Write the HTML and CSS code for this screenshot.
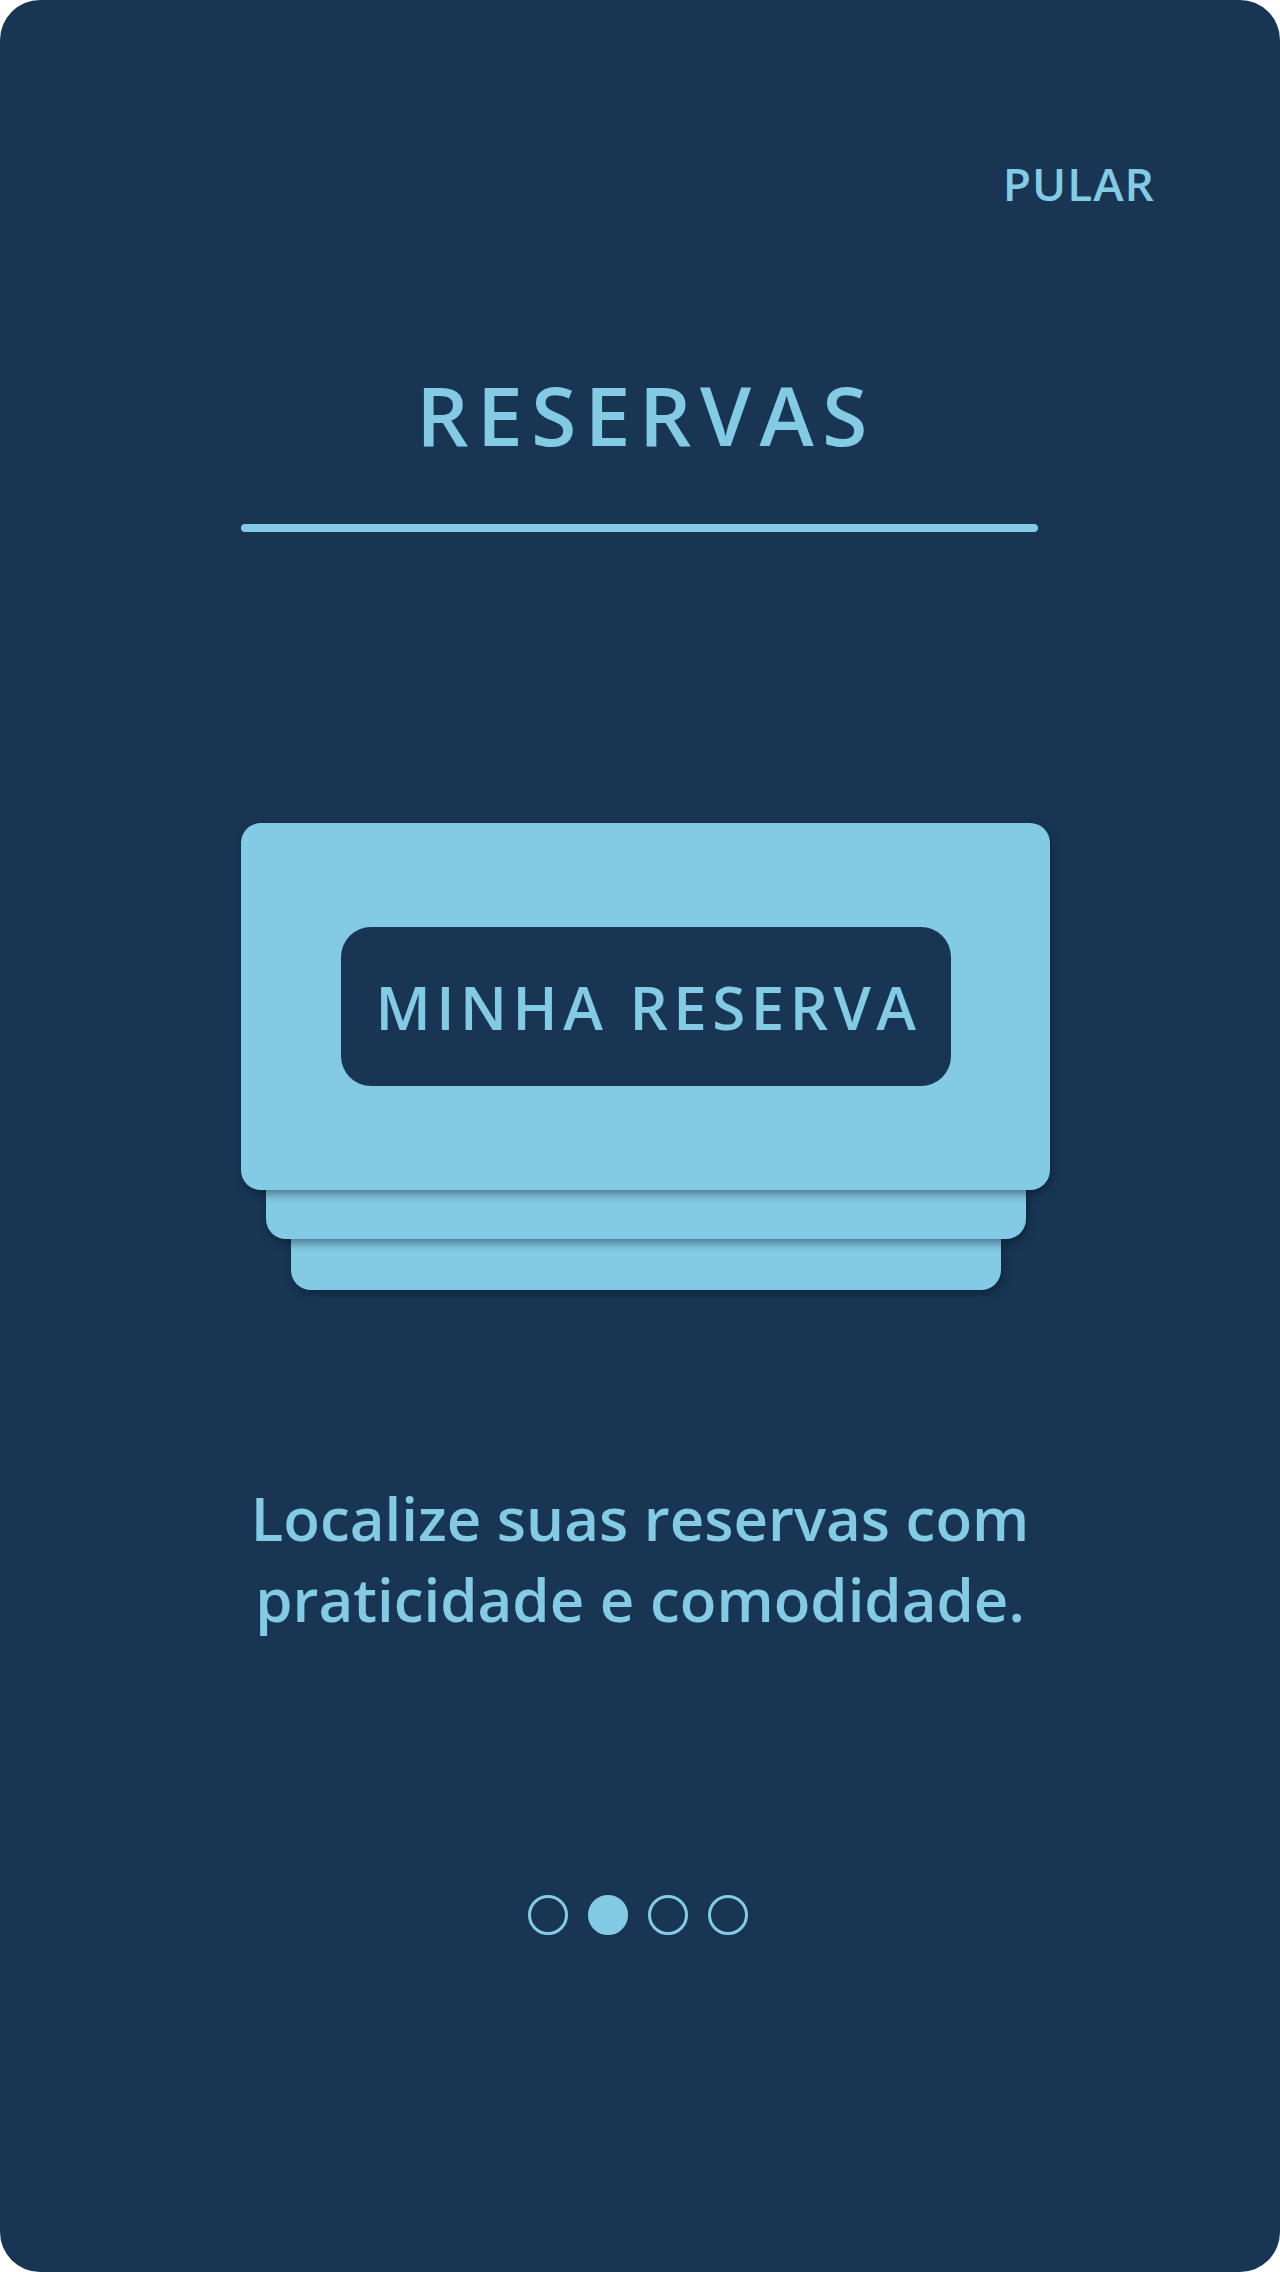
FILE: index.html
```html
<!DOCTYPE html>
<html lang="pt-BR">
<head>
    <meta charset="UTF-8">
    <meta name="viewport" content="width=device-width, initial-scale=1.0">
    <title>Reservas</title>
    <link rel="stylesheet" href="styles.css">
</head>
<body>
    <div class="screen">
        <div class="top-bar">
            <a class="skip" href="#">PULAR</a>
        </div>

        <h1 class="title">RESERVAS</h1>
        <div class="title-line"></div>

        <div class="stack">
            <div class="card">
                <div class="pill">MINHA RESERVA</div>
            </div>
            <div class="sheet sheet-1"></div>
            <div class="sheet sheet-2"></div>
        </div>

        <p class="desc">Localize suas reservas com praticidade e comodidade.</p>

        <div class="dots">
            <span class="dot"></span>
            <span class="dot active"></span>
            <span class="dot"></span>
            <span class="dot"></span>
        </div>
    </div>
</body>
</html>
```

FILE: styles.css
```css
body {
    margin: 0;
    background: #ffffff;
    font-family: "Open Sans", "Noto Sans", sans-serif;
}
.screen {
    width: 1280px;
    height: 2272px;
    background-color: #183654;
    border-radius: 40px;
    overflow: hidden;
    color: #83cae4;
}
.top-bar {
    display: flex;
    justify-content: flex-end;
    padding: 160px 125px 0 0;
}
.skip {
    color: #83cae4;
    text-decoration: none;
    font-size: 46px;
    font-weight: 600;
    line-height: 1;
    letter-spacing: 1px;
}
.title {
    margin: 167px 0 0;
    padding-left: 12px;
    text-align: center;
    font-size: 82px;
    font-weight: 600;
    line-height: 1;
    letter-spacing: 8.5px;
}
.title-line {
    width: 797px;
    height: 8px;
    margin: 69px 0 0 241px;
    border-radius: 4px;
    background-color: #83cae4;
}
.stack {
    width: 809px;
    margin: 291px 0 0 241px;
}
.card {
    position: relative;
    z-index: 2;
    height: 367px;
    display: flex;
    align-items: center;
    justify-content: center;
    background-color: #83cae4;
    border-radius: 20px;
    box-shadow: 2px 4px 10px rgba(5, 20, 35, 0.45);
}
.pill {
    width: 610px;
    height: 159px;
    display: flex;
    align-items: center;
    justify-content: center;
    padding-left: 6px;
    box-sizing: border-box;
    background-color: #183654;
    border-radius: 30px;
    font-size: 60px;
    font-weight: 600;
    letter-spacing: 5.5px;
    color: #83cae4;
}
.sheet {
    position: relative;
    margin: 0 auto;
    background-color: #83cae4;
    border-radius: 0 0 20px 20px;
    box-shadow: 2px 4px 10px rgba(5, 20, 35, 0.45);
}
.sheet-1 {
    z-index: 1;
    width: 760px;
    height: 49px;
}
.sheet-2 {
    width: 710px;
    height: 51px;
}
.desc {
    width: 860px;
    margin: 188px auto 0;
    text-align: center;
    font-size: 60px;
    font-weight: 600;
    line-height: 81px;
}
.dots {
    display: flex;
    justify-content: center;
    gap: 20px;
    margin-top: 255px;
    padding-right: 4px;
}
.dot {
    width: 40px;
    height: 40px;
    box-sizing: border-box;
    border: 3px solid #83cae4;
    border-radius: 50%;
}
.dot.active {
    background-color: #83cae4;
}
```
